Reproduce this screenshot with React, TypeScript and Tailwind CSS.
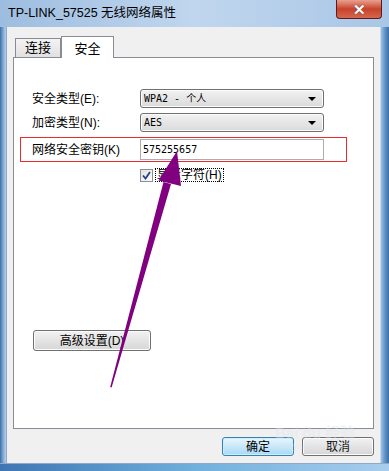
const ui = { fontFamily: '"Liberation Sans", "Noto Sans CJK SC", sans-serif' };
const sim = { fontFamily: '"DejaVu Sans Mono", "Noto Sans CJK SC", monospace' };

const Combo = ({ value }: { value: string }) => (
  <div className="flex h-[19px] w-[184px] items-center justify-between rounded-[3px] border border-[#707070] bg-gradient-to-b from-[#f2f2f2] to-[#dadada] pl-[3px] pr-[7px] shadow-[inset_0_0_0_1px_#fcfcfc]">
    <span className="text-[10px] leading-none text-black" style={sim}>
      {value}
    </span>
    <span className="h-0 w-0 border-x-[4px] border-t-[4px] border-x-transparent border-t-black" />
  </div>
);

const Button = ({ label, primary }: { label: string; primary?: boolean }) => (
  <div
    className={
      primary
        ? "flex h-[19px] w-[72px] items-center justify-center rounded-[3px] border border-[#3c7fb1] bg-gradient-to-b from-[#eaf6fd] to-[#a7d9f5] text-[12px] text-black shadow-[inset_0_0_0_1px_#c8f0ff]"
        : "flex h-[19px] w-[72px] items-center justify-center rounded-[3px] border border-[#707070] bg-gradient-to-b from-[#f2f2f2] to-[#d6d6d6] text-[12px] text-black shadow-[inset_0_0_0_1px_#fcfcfc]"
    }
    style={ui}
  >
    {label}
  </div>
);

const App = () => {
  return (
    <div className="relative flex h-[471px] w-[389px] flex-col overflow-hidden bg-[#5a8cc2]" style={ui}>
      {/* title bar */}
      <div className="flex h-[27px] items-start justify-between bg-gradient-to-r from-[#9dbde0] via-[#c0d6ee] to-[#a9c6e6] pl-[8px]">
        <span className="mt-[7px] text-[12.5px] leading-none text-black">TP-LINK_57525 无线网络属性</span>
        <div className="mr-[7px] flex h-[19px] w-[46px] items-center justify-center rounded-b-[4px] border border-t-0 border-[#5a1d1d] bg-gradient-to-b from-[#e8a08f] via-[#c8412b] to-[#d6674f]">
          <span className="text-[15px] font-bold leading-none text-white [text-shadow:0_0_1px_#333]">✕</span>
        </div>
      </div>

      <div className="flex flex-1">
        <div className="w-[7px] border-r border-[#8fa9c6] bg-gradient-to-r from-[#3f6fa5] via-[#7aa6d4] to-[#b8d0ea]" />

        {/* client area */}
        <div className="flex flex-1 flex-col bg-[#f0f0f0] px-[6px] pt-[9px]">
          <div className="flex items-end pl-[2px]">
            <div className="flex h-[19px] w-[46px] items-center justify-center border border-b-0 border-[#898c95] bg-gradient-to-b from-[#f3f3f3] to-[#e1e1e1] text-[13px] text-black">
              连接
            </div>
            <div className="relative z-10 -mb-px flex h-[22px] w-[53px] items-start justify-center border border-b-0 border-[#898c95] bg-white pt-[2px] text-[13px] text-black">
              安全
            </div>
          </div>

          <div className="flex h-[372px] flex-col border border-[#898c95] bg-white pl-[18px] pt-[31px]">
            <div className="flex items-center">
              <span className="w-[108px] text-[12px] text-black">安全类型(E):</span>
              <Combo value="WPA2 - 个人" />
            </div>
            <div className="mt-[5px] flex items-center">
              <span className="w-[108px] text-[12px] text-black">加密类型(N):</span>
              <Combo value="AES" />
            </div>
            <div className="relative mt-[7px] flex items-center">
              <span className="w-[108px] text-[12px] text-black">网络安全密钥(K)</span>
              <div className="flex h-[21px] w-[184px] items-center border border-[#abadb3] border-t-[#abadb3] bg-white pl-[2px]">
                <span className="text-[10px] text-black" style={sim}>
                  575255657
                </span>
              </div>
              <div className="absolute left-[-12px] top-[-2px] h-[25px] w-[327px] border border-[#f0292e]" />
            </div>
            <div className="mt-[8px] flex items-center pl-[108px]">
              <div className="flex h-[13px] w-[13px] items-center justify-center border border-[#8e8f8f] bg-gradient-to-br from-[#e0e0e0] to-white">
                <svg width="9" height="9" viewBox="0 0 9 9">
                  <path d="M1 4.5 L3.5 7.5 L8 1" fill="none" stroke="#21428c" strokeWidth="1.8" />
                </svg>
              </div>
              <span className="ml-[2px] border border-dotted border-black px-[1px] text-[12px] leading-[12px] text-black">
                显示字符(H)
              </span>
            </div>

            <div className="ml-[1px] mt-[148px] flex h-[21px] w-[118px] items-center justify-center rounded-[3px] border border-[#707070] bg-gradient-to-b from-[#f2f2f2] to-[#d6d6d6] text-[12px] text-black shadow-[inset_0_0_0_1px_#fcfcfc]">
              高级设置(D)
            </div>
          </div>

          <div className="mt-[8px] flex justify-end gap-[8px]">
            <Button label="确定" primary />
            <Button label="取消" />
          </div>
        </div>

        <div className="w-[9px] border-l border-[#c9d9ea] bg-gradient-to-r from-[#9ec0e3] via-[#5e93c8] to-[#3f6fa5]" />
      </div>

      {/* bottom frame */}
      <div className="h-[8px] border-t border-[#8fa9c6] bg-gradient-to-r from-[#3f75b3] via-[#6fb0dc] to-[#a8cdee]" />

      {/* baidu watermark */}
      <div className="pointer-events-none absolute left-[275px] top-[425px] flex flex-col items-center opacity-40">
        <span className="text-[15px] font-bold leading-none text-[#dfe6ee]">Bai du 经验</span>
        <span className="mt-[2px] text-[9px] leading-none text-[#dfe6ee]">jingyan.baidu.com</span>
      </div>

      {/* annotation arrow */}
      <svg className="pointer-events-none absolute left-0 top-0" width="389" height="471" viewBox="0 0 389 471">
        <polygon points="163.5,182 171,184 111.6,387.5 110.2,387" fill="#800080" />
        <polygon points="177,151 158.5,180.5 181,186" fill="#800080" />
      </svg>
    </div>
  );
};

export default App;
